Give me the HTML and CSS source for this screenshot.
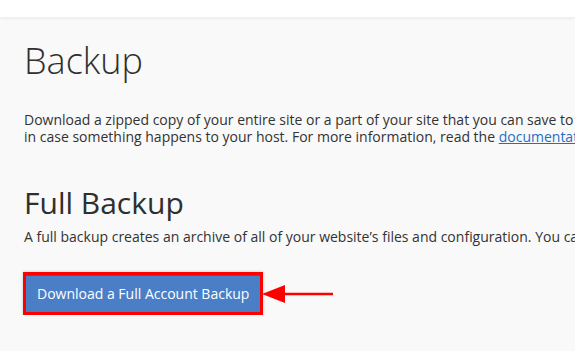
FILE: index.html
```html
<!DOCTYPE html>
<html lang="en">
<head>
    <meta charset="UTF-8">
    <meta name="viewport" content="width=device-width, initial-scale=1.0">
    <title>Backup</title>
    <link rel="stylesheet" href="styles.css">
</head>
<body>

<!-- Barra superior -->
<header class="topbar"></header>

<main class="content">
    <h1 class="page-title">Backup</h1>

    <p class="lead">
        <span class="line">Download a zipped copy of your entire site or a part of your site that you can save to your computer</span>
        <span class="line">in case something happens to your host. For more information, read the <a href="#">documentation</a>.</span>
    </p>

    <!-- Copia completa -->
    <section class="section">
        <h2 class="section-title">Full Backup</h2>
        <p class="lead">
            <span class="line">A full backup creates an archive of all of your website’s files and configuration. You can use this file to move your account.</span>
        </p>

        <div class="action-row">
            <div class="highlight">
                <button class="btn-primary">Download a Full Account Backup</button>
            </div>
            <svg class="arrow" width="72" height="20" viewBox="0 0 72 20">
                <line x1="20" y1="10" x2="71" y2="10" stroke="#f00" stroke-width="2.6"/>
                <polygon points="0,10 23,1 23,19" fill="#f00"/>
            </svg>
        </div>
    </section>
</main>

</body>
</html>
```

FILE: styles.css
```css
body { margin: 0; font-family: "Open Sans", "Liberation Sans", sans-serif; background-color: #f9f9f9; color: #333; overflow: hidden; }
.topbar { height: 17px; background-color: #fff; box-shadow: 0 1px 4px rgba(0, 0, 0, 0.08); }
.content { padding: 0 24px; }
.page-title { margin: 24px 0 0; font-size: 36px; font-weight: 300; line-height: 40px; color: #2f2f2f; }
.lead { margin: 30px 0 0; font-size: 14px; line-height: 17px; }
.lead .line { display: block; white-space: nowrap; }
.lead a { color: #1f6fc4; }
.section-title { margin: 41px 0 0; font-size: 30px; font-weight: 400; line-height: 34px; color: #2f2f2f; }
.section .lead { margin-top: 8px; }

/* Boton con recuadro rojo */
.action-row { display: flex; align-items: center; margin-top: 27px; margin-left: -1px; }
.highlight { border: 3px solid #f00; box-shadow: 0 0 3px rgba(0, 0, 0, 0.2); }
.btn-primary { display: block; padding: 8px 11px 9px; border: none; border-top: 1px solid #2e5f9f; background-color: #4a7ec6; color: #fff; font-family: inherit; font-size: 14px; line-height: 19px; cursor: pointer; }
.arrow { display: block; margin-left: -1px; }
```
